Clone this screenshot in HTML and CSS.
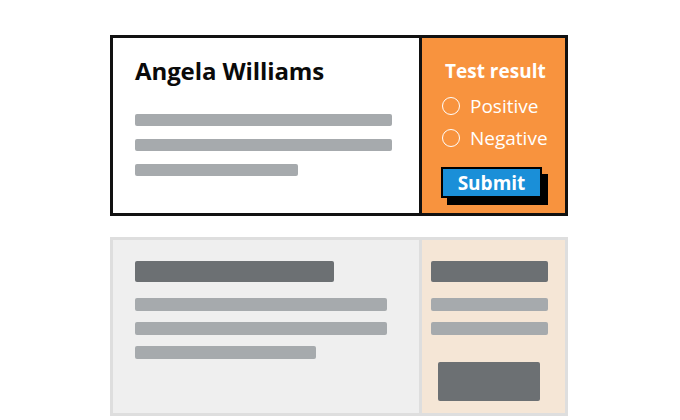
FILE: index.html
```html
<!DOCTYPE html>
<html>
<head>
<meta charset="utf-8">
<link rel="stylesheet" href="styles.css">
</head>
<body>
<div class="page">
  <div class="card card-active">
    <div class="main">
      <h1 class="name">Angela Williams</h1>
      <div class="line line-long"></div>
      <div class="line line-long"></div>
      <div class="line line-short"></div>
    </div>
    <div class="side">
      <div class="side-title">Test result</div>
      <label class="radio"><span class="circle"></span><span>Positive</span></label>
      <label class="radio"><span class="circle"></span><span>Negative</span></label>
      <button class="submit">Submit</button>
    </div>
  </div>
  <div class="card card-ghost">
    <div class="main ghost-main">
      <div class="bar-dark"></div>
      <div class="gline gline-long"></div>
      <div class="gline gline-long"></div>
      <div class="gline gline-short"></div>
    </div>
    <div class="side ghost-side">
      <div class="sbar-dark"></div>
      <div class="sline"></div>
      <div class="sline"></div>
      <div class="sbox"></div>
    </div>
  </div>
</div>
</body>
</html>
```
FILE: styles.css
```css
* { box-sizing: border-box; }
html, body { margin: 0; padding: 0; background: #fff; }
body { font-family: "Open Sans", "Noto Sans", sans-serif; width: 680px; height: 420px; overflow: hidden; }
.page { padding: 35px 0 0 110px; display: flex; flex-direction: column; gap: 21px; }
.card { display: flex; width: 458px; }
.card-active { height: 181px; border: 3px solid #111; background: #fff; }
.main { flex: 1; padding: 18px 0 0 22px; }
.name { margin: 0 0 28px; font-size: 24px; line-height: 30px; font-weight: 700; color: #0a0a0a; letter-spacing: -0.1px; }
.line { height: 12px; background: #a6aaad; border-radius: 2px; margin-bottom: 13px; }
.line-long { width: 257px; }
.line-short { width: 163px; }
.side { width: 146px; border-left: 3px solid #111; background: #f8933e; padding: 21px 0 0 20px; color: #fff; }
.side-title { font-size: 19px; font-weight: 700; line-height: 24px; padding-left: 3px; margin-bottom: 7px; }
.radio { display: flex; align-items: center; height: 32px; font-size: 19px; gap: 10px; }
.circle { width: 18px; height: 18px; border: 1.5px solid #fff; border-radius: 50%; }
.submit { margin-top: 13px; margin-left: -1px; width: 101px; height: 31px; background: #1a8fd8; border: 2px solid #000; box-shadow: 6px 7px 0 #000; color: #fff; font-family: "Open Sans", sans-serif; font-weight: 700; font-size: 19px; line-height: 24px; padding: 0; }
.card-ghost { height: 179px; border: 3px solid #dedede; background: #efefef; }
.ghost-main { padding-top: 21px; }
.bar-dark { width: 199px; height: 21px; background: #6c7073; border-radius: 2px; margin-bottom: 16px; }
.gline { height: 13px; background: #a6aaad; border-radius: 2px; margin-bottom: 11px; }
.gline-long { width: 252px; }
.gline-short { width: 181px; }
.ghost-side { border-left: 3px solid #dedede; background: #f5e6d6; padding: 21px 0 0 9px; }
.sbar-dark { width: 117px; height: 21px; background: #6c7073; border-radius: 2px; margin-bottom: 16px; }
.sline { width: 117px; height: 13px; background: #a6aaad; border-radius: 2px; margin-bottom: 11px; }
.sbox { width: 102px; height: 39px; margin: 27px 0 0 7px; background: #6c7073; border-radius: 2px; }
```
